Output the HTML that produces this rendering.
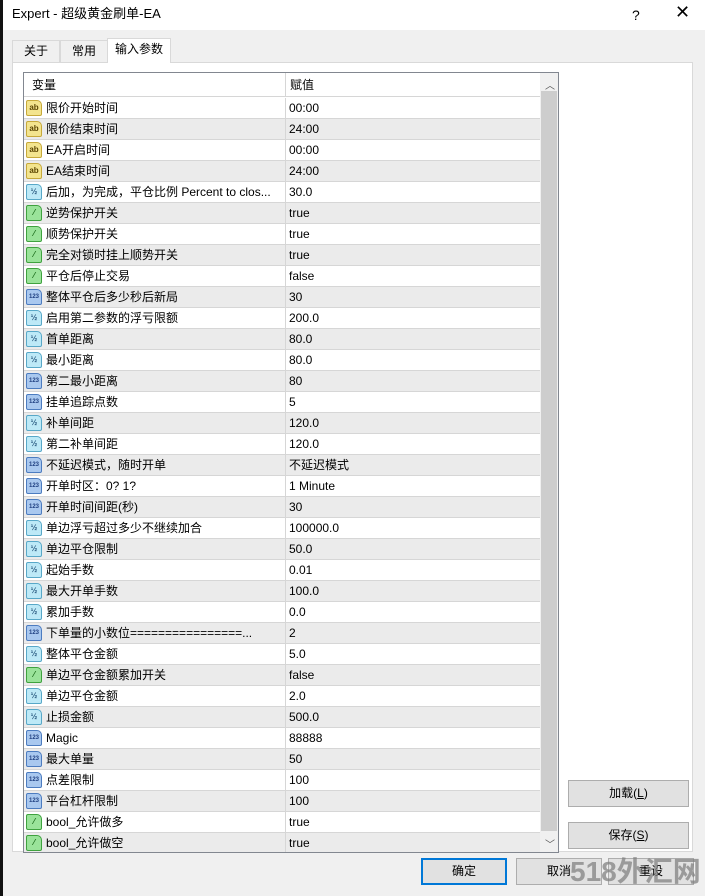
<!DOCTYPE html>
<html><head><meta charset="utf-8"><style>
*{margin:0;padding:0;box-sizing:border-box}
html,body{width:705px;height:896px;overflow:hidden}
body{background:#f0f0f0;position:relative;font-family:"Liberation Sans","Noto Sans CJK SC",sans-serif;font-size:12px;color:#000;line-height:20px}
.abs{position:absolute}
#title{left:3px;top:0;width:702px;height:30px;background:#fff}
#title .t{position:absolute;left:9px;top:4px;font-size:13px;line-height:20px}
.tab{position:absolute;top:40px;height:23px;border:1px solid #d9d9d9;border-bottom:none;background:#f0f0f0;text-align:center;line-height:21px}
#panel{left:12px;top:62px;width:681px;height:790px;background:#fff;border:1px solid #d9d9d9}
#list{left:23px;top:72px;width:536px;height:781px;border:1px solid #828790;background:#fff;overflow:hidden}
.row{position:absolute;left:0;width:517px;height:21px;border-bottom:1px solid #d6d6d6}
.row.g{background:#ebebeb}
.row .n{position:absolute;left:22px;top:0;height:20px;line-height:20px;white-space:nowrap}
.row .v{position:absolute;left:261px;top:0;height:20px;line-height:20px;border-left:1px solid #d6d6d6;padding-left:3px;width:256px}
.ic{position:absolute;left:2px;top:2px;width:16px;height:16px;border:1px solid;border-radius:2px 5px 2px 2px;font-size:8px;line-height:14px;text-align:center;font-weight:bold}
.ab{background:#f3e48e;border-color:#c7a93a;color:#5a4400}
.d{background:#bde9f7;border-color:#58a8c8;color:#2a5a80;font-size:8px}
.i{background:#a9c8ef;border-color:#4c7cc0;color:#1f3f80;font-size:6px}
.b{background:#9ae39a;border-color:#3fa23f;color:#1a6a1a}
#sb{left:516px;top:0;width:18px;height:779px;background:#f0f0f0}
.btn{position:absolute;height:27px;background:#e1e1e1;border:1px solid #adadad;text-align:center;line-height:25px}
</style></head><body>
<div class="abs" style="left:0;top:0;width:3px;height:896px;background:#111"></div>
<div id="title" class="abs"><span class="t">Expert - 超级黄金刷单-EA</span>
<span style="position:absolute;left:629px;top:5px;font-size:14px">?</span>
<span style="position:absolute;left:672px;top:2px;font-size:18px;font-weight:300">✕</span></div>
<div class="tab" style="left:12px;width:48px">关于</div>
<div class="tab" style="left:60px;width:48px">常用</div>
<div class="tab" style="left:107px;width:64px;top:38px;height:25px;background:#fff;z-index:2">输入参数</div>
<div id="panel" class="abs"></div>
<div id="list" class="abs">
<div style="position:absolute;left:0;top:0;width:517px;height:24px;border-bottom:1px solid #d6d6d6"><span style="position:absolute;left:8px;top:2px">变量</span><span style="position:absolute;left:261px;top:0;height:24px;border-left:1px solid #d6d6d6;padding:2px 0 0 4px">赋值</span></div>
<div id="rows"></div>
<div id="sb" class="abs"><div style="position:absolute;left:5px;top:4px;font-size:10px;color:#555">︿</div><div style="position:absolute;left:1px;top:18px;width:16px;height:740px;background:#cdcdcd"></div><div style="position:absolute;left:5px;top:763px;font-size:10px;color:#555">﹀</div></div>
</div>
<div class="btn" style="left:568px;top:780px;width:121px">加载(<u>L</u>)</div>
<div class="btn" style="left:568px;top:822px;width:121px">保存(<u>S</u>)</div>
<div class="btn" style="left:421px;top:858px;width:86px;border:2px solid #0078d7;line-height:23px">确定</div>
<div class="btn" style="left:516px;top:858px;width:86px">取消</div>
<div class="btn" style="left:608px;top:858px;width:86px">重设</div>
<div class="abs" style="left:570px;top:854px;font-size:28px;line-height:36px;font-weight:bold;color:rgba(130,130,130,.75);white-space:nowrap">518外汇网</div>
<script>
var R=[["限价开始时间","ab","00:00"],["限价结束时间","ab","24:00"],["EA开启时间","ab","00:00"],["EA结束时间","ab","24:00"],["后加，为完成，平仓比例 Percent to clos...","d","30.0"],["逆势保护开关","b","true"],["顺势保护开关","b","true"],["完全对锁时挂上顺势开关","b","true"],["平仓后停止交易","b","false"],["整体平仓后多少秒后新局","i","30"],["启用第二参数的浮亏限额","d","200.0"],["首单距离","d","80.0"],["最小距离","d","80.0"],["第二最小距离","i","80"],["挂单追踪点数","i","5"],["补单间距","d","120.0"],["第二补单间距","d","120.0"],["不延迟模式，随时开单","i","不延迟模式"],["开单时区：0? 1?","i","1 Minute"],["开单时间间距(秒)","i","30"],["单边浮亏超过多少不继续加合","d","100000.0"],["单边平仓限制","d","50.0"],["起始手数","d","0.01"],["最大开单手数","d","100.0"],["累加手数","d","0.0"],["下单量的小数位================...","i","2"],["整体平仓金额","d","5.0"],["单边平仓金额累加开关","b","false"],["单边平仓金额","d","2.0"],["止损金额","d","500.0"],["Magic","i","88888"],["最大单量","i","50"],["点差限制","i","100"],["平台杠杆限制","i","100"],["bool_允许做多","b","true"],["bool_允许做空","b","true"]];
var L={ab:"ab",d:"½",i:"123",b:"⁄"};var h="";
R.forEach(function(r,k){h+='<div class="row'+(k%2?' g':'')+'" style="top:'+(25+k*21)+'px"><div class="ic '+r[1]+'">'+L[r[1]]+'</div><span class="n">'+r[0]+'</span><span class="v">'+r[2]+'</span></div>';});
document.getElementById('rows').innerHTML=h;
</script>
</body></html>
